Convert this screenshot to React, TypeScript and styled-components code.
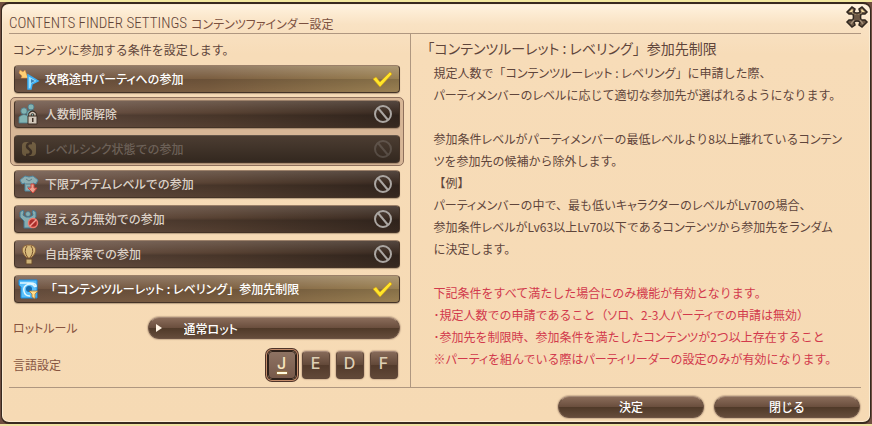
import React, { useState } from 'react';
import styled, { createGlobalStyle, css } from 'styled-components';

const Global = createGlobalStyle`
  *, *::before, *::after { box-sizing: border-box; }
  body { margin: 0; background: #4a3428; }
  button, select, input { font: inherit; }
`;

const Frame = styled.div`
  min-height: 100vh;
  display: flex;
  padding: 2px 1px;
  background: linear-gradient(#f3e8a0 0 2px, #6f4e40 2px calc(100% - 2px), #efe0a4 0);
`;
const Window = styled.main`
  flex: 1;
  min-width: 0;
  display: flex;
  flex-direction: column;
  padding: 12px 9px 4px 7px;
  border: 2px solid #38291f;
  border-width: 2px 1px;
  border-radius: 8px;
  background: linear-gradient(#fff3e0 0, #f9e2c3 20px, #f7dcb8 50px, #f6dab4 100%);
  box-shadow: inset 0 0 0 1px #fbecd2;
  color: #5f453b;
  font: 12px/22px "Noto Sans CJK JP", "Noto Sans", sans-serif;
`;

const Kana = styled.span`
  font-feature-settings: "palt";
`;

/* Katakana runs are set proportionally; everything else keeps its full width. */
function Ja({ children }: { children: string }) {
  return (
    <>
      {children.split(/([ァ-ヶー]+)/).map((part, i) => (i % 2 ? <Kana key={i}>{part}</Kana> : part))}
    </>
  );
}

const Header = styled.header`
  position: relative;
  display: flex;
  align-items: flex-end;
  gap: 4px;
  height: 18px;
  border-bottom: 1px solid #af9780;
`;
const Title = styled.h1`
  margin: 0;
  font: 300 15px/20px "Roboto Condensed", "Open Sans Condensed", Lato, sans-serif;
  white-space: nowrap;
  color: #5f4337;
`;
const Subtitle = styled.span`
  line-height: 18px;
  color: #7b503f;
`;
const CloseButton = styled.button`
  position: absolute;
  top: -11px;
  right: -8px;
  width: 24px;
  height: 24px;
  padding: 0;
  border: 0;
  background: none;
`;

const Body = styled.div`
  flex: 1;
  display: grid;
  grid-template-columns: 402fr 451fr;
  border-bottom: 1px solid #af9780;
`;
const Conditions = styled.section`
  padding: 5px 6px 0 0;
  border-right: 1px solid #af9780;
`;
const Lead = styled.p`
  margin: 0 0 4px 4px;
`;
const Options = styled.div`
  display: flex;
  flex-direction: column;
  gap: 7px;
  padding: 0 4px 0 5px;
`;
const OptionGroup = styled.div`
  display: flex;
  flex-direction: column;
  gap: 7px;
  margin: -3px -4px;
  padding: 2px 3px;
  border: 1px solid #8e705c;
  border-radius: 5px;
  background: #d8b797;
`;

const barOff = css`
  background: linear-gradient(#fff2, #fff0 45%, #0003 55%, #0001),
    linear-gradient(90deg, #70574a, #574132 55%, #3a2b22);
`;
const barOn = css`
  background: linear-gradient(#fff3, #fff0 50%, #0002 50%, #0000),
    linear-gradient(90deg, #6f5443, #7a5d40 50%, #9a8052);
`;
const OptionRow = styled.label<{ $on: boolean; $dim?: boolean }>`
  display: flex;
  align-items: center;
  height: 28px;
  padding: 0 5px 0 3px;
  border: 1px solid #443327;
  border-top-color: #9b8069;
  border-radius: 4px;
  color: ${p => (p.$on ? '#ffffff' : p.$dim ? '#6c6057' : '#dcd2c8')};
  font-weight: 500;
  ${p => (p.$on ? barOn : barOff)}
  ${p => p.$dim && css`
    background: linear-gradient(#4c3d32, #33281f);
    border-top-color: #65564a;
  `}
  box-shadow: 0 1px 1px #5c483666;
`;
const Tick = styled.input`
  position: absolute;
  opacity: 0;
  pointer-events: none;
`;
const OptionIcon = styled.svg<{ $dim?: boolean }>`
  flex: none;
  width: 22px;
  height: 22px;
  margin-right: 5px;
  opacity: ${p => (p.$dim ? 0.35 : 1)};
`;
const OptionText = styled.span`
  flex: 1;
  white-space: nowrap;
`;
const Mark = styled.svg<{ $dim?: boolean }>`
  flex: none;
  width: 22px;
  height: 22px;
  opacity: ${p => (p.$dim ? 0.25 : 1)};
`;

const Setting = styled.div`
  display: flex;
  align-items: center;
  justify-content: space-between;
  padding: 0 4px;
  color: #87543f;
`;
const LotSetting = styled(Setting)`
  margin-top: 14px;
`;
const LanguageSetting = styled(Setting)`
  margin-top: 12px;
`;

const pill = css`
  height: 22px;
  border: 1px solid #6d5444;
  border-top-color: #a58a76;
  border-radius: 11px;
  background: linear-gradient(#8a6c5a, #6b4f3e 48%, #503a29 52%, #654c3b);
  box-shadow: 0 0 1px 1px #a98c7380;
  color: #ffffff;
  font-weight: 500;
`;
const SelectShell = styled.div`
  position: relative;
  width: 252px;
  height: 22px;
`;
const LotSelect = styled.select`
  ${pill}
  display: block;
  width: 100%;
  padding: 0 0 1px 35px;
  appearance: none;
  font-feature-settings: "palt";
`;
const SelectArrow = styled.svg`
  position: absolute;
  left: 7px;
  top: 6px;
  width: 8px;
  height: 10px;
  pointer-events: none;
`;

const Languages = styled.div`
  display: flex;
  gap: 6px;
  padding-right: 2px;
`;
const Language = styled.button<{ $on: boolean }>`
  display: flex;
  flex-direction: column;
  align-items: center;
  width: 28px;
  height: 28px;
  padding: 2px 0 0;
  border: 1px solid #5e4638;
  border-top-color: #a58978;
  border-radius: 4px;
  background: linear-gradient(#866a59, #624838 50%, #523a2b 52%, #614838);
  color: #ded0b5;
  font: 500 16px/18px Inter, sans-serif;
  box-shadow: 0 0 1px 1px #b5967b80;
  ${p => p.$on && css`
    background: linear-gradient(#8e7363, #77594a);
    border-color: #2f211a;
    box-shadow: 0 0 0 1px #2f211a, 0 0 0 2px #c58d6b, 0 0 0 3px #50352a;
    color: #f7e5bd;
    &::after {
      content: '';
      width: 10px;
      height: 2px;
      background: #fffbe0;
      box-shadow: 0 0 2px #e6b12e;
    }
  `}
`;

const Description = styled.section`
  padding: 3px 0 0 23px;
`;
const DescriptionTitle = styled.h2`
  margin: 0 0 3px -13px;
  font-size: 14px;
  font-weight: 400;
  line-height: 22px;
`;
const Text = styled.p<{ $warning?: boolean }>`
  margin: 0 0 22px;
  white-space: nowrap;
  color: ${p => (p.$warning ? '#d2394c' : 'inherit')};
  &:last-child { margin-bottom: 0; }
`;
const Line = styled.span`
  display: block;
`;

const Footer = styled.footer`
  display: flex;
  justify-content: flex-end;
  gap: 10px;
  padding: 8px 1px 0 0;
`;
const ActionButton = styled.button`
  ${pill}
  width: 146px;
  padding: 0 0 1px;
  line-height: 18px;
`;

const icons: Record<string, React.ReactNode> = {
  join: (
    <>
      <path d="M2 2l3 2 2-2 3 8-7 0 1-2-3-3z" fill="#ffcf74" stroke="#e08a3a" strokeWidth=".5" />
      <path d="M10 7l10 6-6 3-1 5h-3z" fill="#9be2ff" stroke="#3aaef5" strokeWidth="1.500" />
      <path d="M13 11l4 2-4 2z" fill="#3b7fb0" />
    </>
  ),
  unlock: (
    <>
      <g fill="#82b3b2" stroke="#4a7889" strokeWidth=".8">
        <circle cx="13" cy="4" r="3" /><path d="M9 16V9q4-4 8 0v7z" />
        <circle cx="6" cy="8" r="3.200" /><path d="M1 20v-6q5-5 10 0v6z" />
      </g>
      <path d="M12 13v-2q2.500-4 5 0v3" fill="none" stroke="#3b2c23" strokeWidth="3.500" />
      <path d="M12 13v-2q2.500-3 5 0v3" fill="none" stroke="#d3c8bb" strokeWidth="1.500" />
      <path d="M10 13h9v8h-9z" fill="#d3c8bb" stroke="#3b2c23" />
      <path d="M14 15h1.500v4H14z" fill="#3b2c23" />
    </>
  ),
  sync: (
    <>
      <rect x="4" y="4" width="14" height="14" rx="4" fill="#c4a96c" />
      <path d="M14 5C8 5 8 9 11 11s3 6-3 6" fill="none" stroke="#3a2b20" strokeWidth="2.500" />
    </>
  ),
  gear: (
    <>
      <path d="M7 3l4 1 4-1 5 4-2 4-3-1v8H7v-8l-3 1-2-4z" fill="#8fb0b3" stroke="#4f87a0" />
      <path d="M8 6l3 2 3-2M8 11h6M9 14h4" fill="none" stroke="#5d7b86" />
      <path d="M13 11h3v4h3l-4 5-5-5h3z" fill="#eba18f" stroke="#cf473c" />
    </>
  ),
  power: (
    <>
      <path d="M5 2L2 4v5l4 4v7h8v-7l4-4V4l-3-2-1 2 1 3-3 2H8L5 7l1-3z" fill="#86adb0" stroke="#417792" />
      <circle cx="10" cy="6" r="2.500" fill="#86adb0" stroke="#417792" strokeWidth=".7" />
      <circle cx="15" cy="15" r="4.500" fill="#a92d29" stroke="#f07c6f" strokeWidth="1.500" />
      <path d="M12 18l6-6" stroke="#f5a095" strokeWidth="1.500" />
    </>
  ),
  balloon: (
    <>
      <path d="M11 2C2 2 3 10 9 15h4c6-5 7-13-2-13z" fill="#d9bb7c" stroke="#8c643a" />
      <path d="M9 3Q5 8 10 15M13 3q4 5-1 12" fill="none" stroke="#75502d" />
      <path d="M8 16h6v5H8z" fill="#cdb177" stroke="#694a2d" />
    </>
  ),
  roulette: (
    <>
      <path d="M1 2h18v18H3V9L1 7z" fill="#58bffb" stroke="#178de2" />
      <path d="M17 9a6 6 0 1 0-5 9M2 5h10q7 0 6 4" fill="none" stroke="#e1f8ff" strokeWidth="1.500" />
      <circle cx="11" cy="11" r="3" fill="#176cae" />
      <path d="M11 13h9l-3 3v5l-3-2v-3z" fill="#ffe08d" stroke="#a76724" strokeWidth=".7" />
    </>
  ),
};

type Option = { id: string; label: string; on: boolean; dim?: boolean };
const options: Option[] = [
  { id: 'join', label: '攻略途中パーティへの参加', on: true },
  { id: 'unlock', label: '人数制限解除', on: false },
  { id: 'sync', label: 'レベルシンク状態での参加', on: false, dim: true },
  { id: 'gear', label: '下限アイテムレベルでの参加', on: false },
  { id: 'power', label: '超える力無効での参加', on: false },
  { id: 'balloon', label: '自由探索での参加', on: false },
  { id: 'roulette', label: '「コンテンツルーレット : レベリング」参加先制限', on: true },
];

const paragraphs: { warning?: boolean; lines: string[] }[] = [
  {
    lines: [
      '規定人数で「コンテンツルーレット : レベリング」に申請した際、',
      'パーティメンバーのレベルに応じて適切な参加先が選ばれるようになります。',
    ],
  },
  {
    lines: [
      '参加条件レベルがパーティメンバーの最低レベルより8以上離れているコンテン',
      'ツを参加先の候補から除外します。',
      '【例】',
      'パーティメンバーの中で、最も低いキャラクターのレベルがLv70の場合、',
      '参加条件レベルがLv63以上Lv70以下であるコンテンツから参加先をランダム',
      'に決定します。',
    ],
  },
  {
    warning: true,
    lines: [
      '下記条件をすべて満たした場合にのみ機能が有効となります。',
      '･規定人数での申請であること（ソロ、2-3人パーティでの申請は無効）',
      '･参加先を制限時、参加条件を満たしたコンテンツが2つ以上存在すること',
      '※パーティを組んでいる際はパーティリーダーの設定のみが有効になります。',
    ],
  },
];

function OptionItem({ option }: { option: Option }) {
  const [on, setOn] = useState(option.on);
  return (
    <OptionRow $on={on} $dim={option.dim}>
      <Tick type="checkbox" checked={on} disabled={option.dim} onChange={e => setOn(e.target.checked)} />
      <OptionIcon viewBox="0 0 22 22" $dim={option.dim} aria-hidden="true">{icons[option.id]}</OptionIcon>
      <OptionText><Ja>{option.label}</Ja></OptionText>
      <Mark viewBox="0 0 22 22" $dim={option.dim} aria-hidden="true">
        {on ? (
          <path d="M1 11l3-2 4 5L18 4l2 2L8 19z" fill="#ffe629" stroke="#d49a13" strokeWidth=".6" />
        ) : (
          <g fill="none" stroke="#aba6a2" strokeWidth="2">
            <circle cx="11" cy="11" r="8" /><path d="M6 5l10 12" />
          </g>
        )}
      </Mark>
    </OptionRow>
  );
}

export default function App() {
  const [language, setLanguage] = useState('J');
  return (
    <>
      <Global />
      <Frame>
        <Window>
          <Header>
            <Title>CONTENTS FINDER SETTINGS</Title>
            <Subtitle><Ja>コンテンツファインダー設定</Ja></Subtitle>
            <CloseButton type="button" aria-label="閉じる">
              <svg width="24" height="24" viewBox="0 0 24 24">
                <path d="M2 7l5-5 3 2-1 3q3 2 6 0l-1-3 3-2 5 5-2 2-4 0q-1 3 0 6l4 0 2 2-5 5-3-2 1-3q-3-2-6 0l1 3-3 2-5-5 2-2 4 0q1-3 0-6L4 9z" fill="#6b5744" stroke="#30271f" strokeWidth="1.500" />
                <path d="M4 7l3-3 1 1-1 3q5 4 10 0l-1-3 1-1 3 3h-3l-3 3h-4L7 7z" fill="#f5dda2" />
                <path d="M6 19l3-4M18 19l-3-4" stroke="#a18c76" strokeWidth="1.500" />
              </svg>
            </CloseButton>
          </Header>
          <Body>
            <Conditions>
              <Lead><Ja>コンテンツに参加する条件を設定します。</Ja></Lead>
              <Options>
                <OptionItem option={options[0]} />
                <OptionGroup>
                  <OptionItem option={options[1]} />
                  <OptionItem option={options[2]} />
                </OptionGroup>
                {options.slice(3).map(o => <OptionItem key={o.id} option={o} />)}
              </Options>
              <LotSetting>
                <label htmlFor="lot"><Ja>ロットルール</Ja></label>
                <SelectShell>
                  <LotSelect id="lot"><option>通常ロット</option></LotSelect>
                  <SelectArrow viewBox="0 0 8 10" aria-hidden="true"><path d="M1 1l6 4-6 4z" fill="#fff4e4" /></SelectArrow>
                </SelectShell>
              </LotSetting>
              <LanguageSetting>
                <span id="language">言語設定</span>
                <Languages role="group" aria-labelledby="language">
                  {['J', 'E', 'D', 'F'].map(l => (
                    <Language key={l} type="button" $on={l === language} aria-pressed={l === language} onClick={() => setLanguage(l)}>{l}</Language>
                  ))}
                </Languages>
              </LanguageSetting>
            </Conditions>
            <Description>
              <DescriptionTitle><Ja>「コンテンツルーレット : レベリング」参加先制限</Ja></DescriptionTitle>
              {paragraphs.map((p, i) => (
                <Text key={i} $warning={p.warning}>
                  {p.lines.map(line => <Line key={line}><Ja>{line}</Ja></Line>)}
                </Text>
              ))}
            </Description>
          </Body>
          <Footer>
            <ActionButton type="button">決定</ActionButton>
            <ActionButton type="button">閉じる</ActionButton>
          </Footer>
        </Window>
      </Frame>
    </>
  );
}
